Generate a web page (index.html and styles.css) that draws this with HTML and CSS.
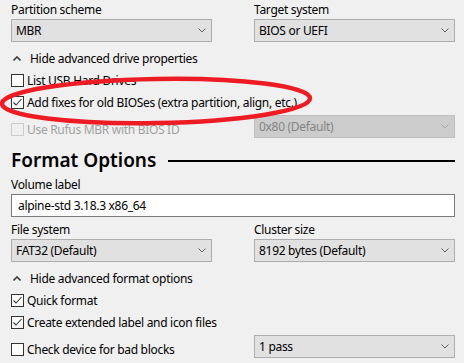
FILE: index.html
```html
<!DOCTYPE html>
<html lang="en">
<head>
  <meta charset="UTF-8">
  <title>Rufus - Drive Properties</title>
  <link rel="stylesheet" href="styles.css">
</head>
<body>

  <div class="pane">

    <div class="pair">
      <div class="field">
        <div class="label">Partition scheme</div>
        <div class="combo"><span>MBR</span><svg class="chev" viewBox="0 0 8 5"><polyline points="0.5,0.5 4,4 7.5,0.5"/></svg></div>
      </div>
      <div class="field">
        <div class="label">Target system</div>
        <div class="combo"><span>BIOS or UEFI</span><svg class="chev" viewBox="0 0 8 5"><polyline points="0.5,0.5 4,4 7.5,0.5"/></svg></div>
      </div>
    </div>

    <div class="toggle">
      <svg class="caret" viewBox="0 0 8 5"><polyline points="0.5,4.5 4,1 7.5,4.5"/></svg>
      Hide advanced drive properties
    </div>

    <div class="check first">
      <span class="box"></span>List USB Hard Drives
    </div>
    <div class="check">
      <span class="box"><svg viewBox="0 0 11 11"><polyline points="1.5,5.5 4,8 9.5,2"/></svg></span>Add fixes for old BIOSes (extra partition, align, etc.)
    </div>
    <div class="pair with-check">
      <div class="check disabled">
        <span class="box"></span>Use Rufus MBR with BIOS ID
      </div>
      <div class="combo off"><span>0x80 (Default)</span><svg class="chev" viewBox="0 0 8 5"><polyline points="0.5,0.5 4,4 7.5,0.5"/></svg></div>
    </div>

    <h2 class="section">Format Options</h2>

    <div class="label">Volume label</div>
    <div class="textbox">alpine-std 3.18.3 x86_64</div>

    <div class="pair tight">
      <div class="field">
        <div class="label">File system</div>
        <div class="combo"><span>FAT32 (Default)</span><svg class="chev" viewBox="0 0 8 5"><polyline points="0.5,0.5 4,4 7.5,0.5"/></svg></div>
      </div>
      <div class="field">
        <div class="label">Cluster size</div>
        <div class="combo"><span>8192 bytes (Default)</span><svg class="chev" viewBox="0 0 8 5"><polyline points="0.5,0.5 4,4 7.5,0.5"/></svg></div>
      </div>
    </div>

    <div class="toggle">
      <svg class="caret" viewBox="0 0 8 5"><polyline points="0.5,4.5 4,1 7.5,4.5"/></svg>
      Hide advanced format options
    </div>

    <div class="check first">
      <span class="box"><svg viewBox="0 0 11 11"><polyline points="1.5,5.5 4,8 9.5,2"/></svg></span>Quick format
    </div>
    <div class="check">
      <span class="box"><svg viewBox="0 0 11 11"><polyline points="1.5,5.5 4,8 9.5,2"/></svg></span>Create extended label and icon files
    </div>
    <div class="pair with-check">
      <div class="check">
        <span class="box"></span>Check device for bad blocks
      </div>
      <div class="combo"><span>1 pass</span><svg class="chev" viewBox="0 0 8 5"><polyline points="0.5,0.5 4,4 7.5,0.5"/></svg></div>
    </div>

  </div>

  <!-- red marker drawn over the screenshot -->
  <svg class="marker" width="320" height="60" viewBox="0 0 320 60">
    <ellipse cx="156" cy="25" rx="154" ry="22" transform="rotate(-1 156 25)"/>
  </svg>

</body>
</html>
```

FILE: styles.css
```css
body {
  margin: 0;
  background: #f0f0f0;
  font-family: "Noto Sans", "Open Sans", sans-serif;
  font-size: 12px;
  letter-spacing: -0.3px;
  color: #000;
  width: 464px;
  height: 363px;
  overflow: hidden;
  position: relative;
}
.pane {
  padding: 2px 9px 0 11px;
}
.label {
  height: 17px;
  line-height: 16px;
}
.pair {
  display: grid;
  grid-template-columns: 201px 201px;
  column-gap: 42px;
}
.pair.tight {
  margin-top: 5px;
}
.pair.with-check {
  align-items: center;
  margin-top: 5px;
}
.combo {
  height: 23px;
  box-sizing: border-box;
  border: 1px solid #adadad;
  background: #e1e1e1;
  display: flex;
  align-items: center;
  justify-content: space-between;
  padding: 0 5px 0 4px;
}
.combo.off {
  background: #cccccc;
  border-color: #bfbfbf;
  color: #838383;
}
.chev {
  width: 8px;
  height: 5px;
  fill: none;
  stroke: #606060;
  stroke-width: 1;
}
.combo.off .chev {
  stroke: #a8a8a8;
}
.toggle {
  display: flex;
  align-items: center;
  height: 16px;
  margin-top: 8px;
}
.caret {
  width: 8px;
  height: 5px;
  fill: none;
  stroke: #404040;
  stroke-width: 1.6;
  margin: 0 9px 0 2px;
}
.check {
  display: flex;
  align-items: center;
  height: 16px;
  margin-top: 6px;
}
.check.first {
  margin-top: 6px;
}
.box {
  width: 13px;
  height: 13px;
  box-sizing: border-box;
  border: 1px solid #333;
  background: #fff;
  margin-right: 3px;
  display: flex;
}
.box svg {
  width: 11px;
  height: 11px;
  fill: none;
  stroke: #333;
  stroke-width: 1.1;
}
.check.disabled {
  color: #a0a0a0;
}
.check.disabled .box {
  border-color: #cccccc;
  background: #f0f0f0;
}
.section {
  display: flex;
  align-items: center;
  margin: 10px 0 5px;
  font-size: 19px;
  font-weight: 600;
  letter-spacing: 0;
  line-height: 24px;
  height: 24px;
}
.section::after {
  content: "";
  flex: 1;
  height: 2px;
  background: #000;
  margin: 2px 0 0 12px;
}
.textbox {
  height: 23px;
  box-sizing: border-box;
  border: 1px solid #7a7a7a;
  background: #fff;
  padding: 0 6px;
  line-height: 21px;
}
.marker {
  position: absolute;
  left: 0;
  top: 76px;
  fill: none;
  stroke: #ed1c24;
  stroke-width: 4.5;
}
```
